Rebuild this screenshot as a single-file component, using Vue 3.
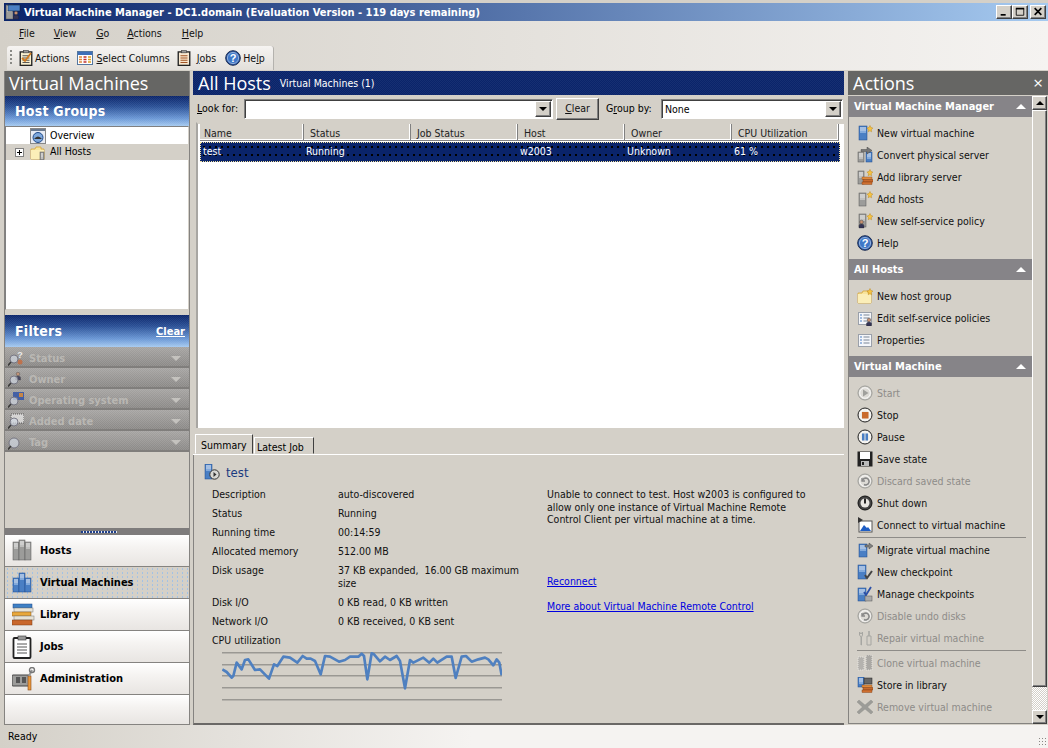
<script setup>
const tower = (x, y, w, h, c = 'b') => {
  const [m, l, d] = c === 'b' ? ['#4a7fc4', '#bcd6f2', '#1f4a8a'] : ['#9c9c9a', '#e4e4e2', '#555555']
  return `<rect x="${x}" y="${y}" width="${w}" height="${h}" fill="${m}" stroke="${d}" stroke-width=".5"/><rect x="${x + 1}" y="${y + 1.5}" width="${w - 2}" height="1" fill="#fff"/><rect x="${x + 1}" y="${y + 3.5}" width="${w - 2}" height="1" fill="#fff"/><rect x="${x + 1}" y="${y + 5.5}" width="${w - 2}" height="1" fill="${l}"/>`
}
const star = `<path d="M13 .5l.9 2 2 .6-1.6 1.5.3 2.2-1.7-1-1.7 1 .3-2.2-1.6-1.5 2-.6z" fill="#f6c343" stroke="#b07c10" stroke-width=".4"/>`
const arrow = `<path d="M8 3h4V1l4 3-4 3V5H8z" fill="#808080" stroke="#333" stroke-width=".4"/>`
const books = (x, y) => `<rect x="${x}" y="${y}" width="10" height="2.5" fill="#e08a3c" stroke="#8a4a18" stroke-width=".4"/><rect x="${x + 1}" y="${y + 2.5}" width="10" height="2.5" fill="#c96a2c" stroke="#7a3a10" stroke-width=".4"/><rect x="${x}" y="${y + 5}" width="10" height="2.5" fill="#d07030" stroke="#7a3a10" stroke-width=".4"/>`
const person = (x, y) => `<circle cx="${x}" cy="${y}" r="1.8" fill="#c89070" stroke="#333" stroke-width=".4"/><path d="M${x - 2.5} ${y + 6}v-2.5q0-1.5 2.5-1.5t2.5 1.5V${y + 6}z" fill="#335" stroke="#222" stroke-width=".3"/>`
const folder = `<path d="M1 5h4l1-2h5v2h3v10H1z" fill="#f8e49c" stroke="#d6a436" stroke-width=".8"/><path d="M1 6h13v9H1z" fill="#fbeeb8"/>`
const page = `<rect x="1.5" y="2.5" width="13" height="12" fill="#f4f6fa" stroke="#9aa0aa"/><path d="M3 5h2M3 8h2M3 11h2" stroke="#4a7fc4" stroke-width="1.2"/><path d="M6.5 5h6M6.5 8h6M6.5 11h6" stroke="#7a8696"/>`
const circle = (f = '#eceae6', s = '#222') => `<circle cx="8" cy="8" r="7" fill="${f}" stroke="${s}"/><circle cx="8" cy="8" r="5.3" fill="none" stroke="#fff" stroke-opacity=".8"/>`
const undo = `<path d="M5 5v3h3" fill="none" stroke="#888" stroke-width="1.3"/><path d="M5.4 7.6A3.4 3.4 0 1 1 7 11.5" fill="none" stroke="#888" stroke-width="1.6"/>`
const help = `<circle cx="8" cy="8" r="7.3" fill="#2c5aa8" stroke="#1c2c50"/><circle cx="8" cy="8" r="5.6" fill="#3f78c8" stroke="#b8cdea" stroke-width=".7"/><text x="8" y="12" text-anchor="middle" font-family="Liberation Sans" font-weight="700" font-size="11" fill="#fff">?</text>`
const clip = (sz) => `<rect x="${sz * .14}" y="${sz * .12}" width="${sz * .72}" height="${sz * .84}" fill="#fff" stroke="#222" stroke-width="${sz / 12}"/><rect x="${sz * .35}" y="${sz * .02}" width="${sz * .3}" height="${sz * .16}" fill="#999" stroke="#333" stroke-width=".5"/><path d="M${sz * .28} ${sz * .36}h${sz * .44}M${sz * .28} ${sz * .5}h${sz * .44}M${sz * .28} ${sz * .64}h${sz * .44}M${sz * .28} ${sz * .78}h${sz * .44}" stroke="#555" stroke-width="${sz / 16}"/>`
const lens = (inner) => `${inner}<circle cx="6" cy="9" r="4" fill="#dce4f0" fill-opacity=".75" stroke="#667" stroke-width=".9"/><path d="M3 12l-3 3.5" stroke="#222" stroke-width="1.5"/>`

const icons = {
  logo: `${tower(1, 1, 7, 14, 'g')}<rect x="3" y="1" width="12" height="6" fill="#4a7fc4" stroke="#123" stroke-width=".5"/>${person(11, 9)}`,
  tbActions: `${clip(16).replace('#fff', '#f8f0d0')}<path d="M4 8l3 3 6-8" fill="none" stroke="#d07a20" stroke-width="1.8"/>`,
  columns: `<rect x=".5" y="1.5" width="15" height="13" fill="#fff" stroke="#55779f"/><rect x="1" y="2" width="14" height="3" fill="#3f6fb8"/><path d="M2 7h3M2 9.500h3M2 12h3" stroke="#e08a3c" stroke-width="1.3"/><path d="M6.500 7h3M6.500 9.500h3M6.500 12h3" stroke="#c03030" stroke-width="1.3"/><path d="M11 7h3M11 9.500h3M11 12h3" stroke="#e0a020" stroke-width="1.3"/>`,
  jobs: clip(16).replace('#fff', '#f8e8d0').replace('#555', '#a05020'),
  help,
  overview: `<rect x=".5" y=".5" width="15" height="15" fill="#e8ecf4" stroke="#888"/><rect x="1" y="1" width="14" height="2" fill="#6a7a90"/><circle cx="8" cy="9.500" r="5" fill="#7ea8dc" stroke="#1f4a8a"/><path d="M4 11q4-5 8 0z" fill="#333"/>`,
  allhosts: `${folder}${tower(10, 8, 4, 8, 'g')}`,
  summary: `${tower(1, 0, 7, 15)}<circle cx="10.500" cy="10.500" r="4.700" fill="#d8d8d4" stroke="#333"/><path d="M9.500 8l3 2.500-3 2.500z" fill="#333"/>`,
  fStatus: lens(`<text x="12" y="8" text-anchor="middle" font-family="Liberation Sans" font-weight="700" font-size="9" fill="#fff">?</text><circle cx="12" cy="12" r="2.500" fill="#c96a3c"/>`),
  fOwner: lens(person(10, 3)),
  fOs: lens(`<rect x="5" y="0" width="11" height="8" fill="#2c50a8"/><rect x="11" y="1" width="4" height="4" fill="#d08030"/>`),
  fDate: lens(`<rect x="3" y="1" width="13" height="9" fill="#fff" fill-opacity=".7" stroke="#444" stroke-dasharray="1 1"/>`),
  fTag: lens('').replace('r="4"', 'r="5"'),
  navHosts: `${tower(1, 3, 6, 18, 'g')}${tower(7, 1, 6, 20, 'g')}${tower(13, 3, 6, 18, 'g')}`,
  navVms: `${tower(1, 7, 6, 14)}${tower(7, 2, 6, 19)}${tower(13, 7, 6, 14)}`,
  navLibrary: `<rect x="1" y="1" width="19" height="4" fill="#3f80c4" stroke="#1f4a8a" stroke-width=".5"/><rect x="2" y="5" width="19" height="4" fill="#e8e4d8" stroke="#777" stroke-width=".5"/><rect x="0" y="9" width="19" height="4" fill="#e8a83c" stroke="#8a5a18" stroke-width=".5"/><rect x="2" y="13" width="20" height="4" fill="#e6e2d6" stroke="#777" stroke-width=".5"/><rect x="0" y="17" width="20" height="5" fill="#c9672c" stroke="#7a3a10" stroke-width=".5"/>`,
  navJobs: `<rect x="1.500" y="3" width="17" height="20" rx="1" fill="#fff" stroke="#222" stroke-width="1.800"/><rect x="6" y="1" width="8" height="4" fill="#999" stroke="#333" stroke-width=".6"/><path d="M5 9h10M5 12h10M5 15h10M5 18h10" stroke="#555"/>`,
  navAdmin: `<rect x="0" y="8" width="18" height="11" rx="1" fill="#9c9c9a" stroke="#444"/><rect x="4" y="10" width="4" height="6" fill="#555"/><rect x="10" y="10" width="4" height="6" fill="#555"/><rect x="16" y="9" width="3" height="14" fill="#e8983c" stroke="#8a4a18" stroke-width=".6"/><path d="M17 9l3-6" stroke="#999" stroke-width="2"/><circle cx="20" cy="3" r="2.500" fill="none" stroke="#777" stroke-width="1.400"/>`,
  newVm: `${tower(2, 1, 8, 14)}${star}`,
  convert: `${tower(1, 5, 6, 10, 'g')}${tower(9, 5, 6, 10)}<path d="M4 2.500h6V0l5 3.500L10 7V4.500H4z" fill="#777" stroke="#333" stroke-width=".4"/>`,
  addLib: `${tower(1, 2, 6, 13, 'g')}${books(5, 8)}${star}`,
  addHosts: `${tower(2, 2, 7, 13, 'g')}${star}`,
  newPolicy: `${tower(2, 1, 7, 13, 'g')}${person(4.500, 9)}${star}`,
  newGroup: `${folder}${star}`,
  editPolicy: `${page}${person(12, 10)}`,
  props: page,
  start: `${circle('#dddbd6', '#9a9a96')}<path d="M6 4.500L11.500 8 6 11.500z" fill="#a0a09c"/>`,
  stop: `${circle()}<rect x="5" y="5" width="6.500" height="6.500" fill="#c96a2c"/>`,
  pause: `${circle()}<rect x="5" y="4.500" width="2.500" height="7" fill="#4a7fc4"/><rect x="8.500" y="4.500" width="2.500" height="7" fill="#4a7fc4"/>`,
  save: `<rect x=".5" y=".5" width="15" height="15" fill="#222"/><rect x="3" y="1" width="10" height="7" fill="#fff"/><rect x="4" y="10" width="8" height="5" fill="#bbb"/><rect x="5" y="11" width="2" height="3" fill="#222"/>`,
  discard: `${circle('#dddbd6', '#9a9a96')}${undo}`,
  shutdown: `<circle cx="8" cy="8" r="7" fill="#444" stroke="#111"/><circle cx="8" cy="8" r="4.500" fill="#e8e6e2"/><path d="M8 3.500v5" stroke="#111" stroke-width="1.800"/>`,
  connect: `<rect x="2" y="4" width="13" height="11" fill="#fff" stroke="#555"/><path d="M3 14l4-6 3 3 1-1 3 4z" fill="#1f5ec4"/><path d="M1 0l5 3-5 3z" fill="#333"/>`,
  migrate: `${tower(2, 2, 8, 13)}${arrow}`,
  newCp: `${tower(1, 1, 8, 14)}<path d="M8 11l2 3 5-7" fill="none" stroke="#444" stroke-width="2"/>`,
  manageCp: `${tower(1, 2, 8, 13)}<path d="M7 6l2 3 5-8" fill="none" stroke="#2c50a8" stroke-width="1.800"/><rect x="8" y="10" width="7" height="5" fill="#aaa" stroke="#555" stroke-width=".5"/>`,
  repair: `<path d="M4 15V7L2.500 5V2l1.500 2 1.500-2v3L4.500 7v8zM10 15V6h4v9z" fill="none" stroke="#a6a6a2"/><path d="M12 6V1" stroke="#a6a6a2" stroke-width="1.500"/>`,
  clone: `<rect x="1" y="2" width="6" height="13" fill="#b4b2ae" stroke-dasharray="1 1" stroke="#e6e4e0"/><rect x="9" y="0" width="6" height="15" fill="#aaa8a4" stroke-dasharray="1 1" stroke="#e6e4e0"/>`,
  store: `${tower(1, 0, 6, 10)}<rect x="7" y="1" width="8" height="6" fill="#666" stroke="#222" stroke-width=".5"/>${books(5, 8)}`,
  remove: `<path d="M2 1l6 5 6-5 2 2-5.500 5 5.500 5-2 2-6-5-6 5-2-2 5.500-5L0 3z" fill="#9c9c98" stroke="#8a8a86" stroke-width=".4"/>`,
}

const menus = [['F', 'ile'], ['V', 'iew'], ['G', 'o'], ['A', 'ctions'], ['H', 'elp']]
const filters = [['fStatus', 'Status'], ['fOwner', 'Owner'], ['fOs', 'Operating system'], ['fDate', 'Added date'], ['fTag', 'Tag']]
const navs = [['navHosts', 'Hosts'], ['navVms', 'Virtual Machines', true], ['navLibrary', 'Library'], ['navJobs', 'Jobs'], ['navAdmin', 'Administration']]
const columns = ['Name', 'Status', 'Job Status', 'Host', 'Owner', 'CPU Utilization']
const cells = ['test', 'Running', '', 'w2003', 'Unknown', '61 %']
const details = [
  ['Description', 'auto-discovered'],
  ['Status', 'Running'],
  ['Running time', '00:14:59'],
  ['Allocated memory', '512.00 MB'],
  ['Disk usage', '37 KB expanded,\u00a0 16.00 GB maximum\nsize'],
  ['Disk I/O', '0 KB read, 0 KB written'],
  ['Network I/O', '0 KB received, 0 KB sent'],
  ['CPU utilization', ''],
]
const sections = [
  { title: 'Virtual Machine Manager', items: [['newVm', 'New virtual machine'], ['convert', 'Convert physical server'], ['addLib', 'Add library server'], ['addHosts', 'Add hosts'], ['newPolicy', 'New self-service policy'], ['help', 'Help']] },
  { title: 'All Hosts', items: [['newGroup', 'New host group'], ['editPolicy', 'Edit self-service policies'], ['props', 'Properties']] },
  { title: 'Virtual Machine', items: [
    ['start', 'Start', 1], ['stop', 'Stop'], ['pause', 'Pause'], ['save', 'Save state'], ['discard', 'Discard saved state', 1], ['shutdown', 'Shut down'], ['connect', 'Connect to virtual machine'], 'sep',
    ['migrate', 'Migrate virtual machine'], ['newCp', 'New checkpoint'], ['manageCp', 'Manage checkpoints'], ['discard', 'Disable undo disks', 1], ['repair', 'Repair virtual machine', 1], 'sep',
    ['clone', 'Clone virtual machine', 1], ['store', 'Store in library'], ['remove', 'Remove virtual machine', 1], ['props', ''],
  ] },
]
const cpu = '97,150 110,158 125,175 130,170 140,130 155,150 165,122 175,120 195,152 210,150 237,178 252,135 262,140 280,112 300,115 322,130 338,110 350,118 362,118 375,125 392,165 405,110 420,112 447,127 465,122 480,112 505,112 515,103 522,110 532,180 545,102 552,105 570,126 585,112 600,122 620,110 630,125 645,207 660,122 670,130 700,115 718,130 730,118 742,130 770,112 785,112 797,176 815,112 828,110 845,127 865,120 885,115 895,120 910,138 920,120 928,130 935,168'
</script>

<template>
  <div class="window">
    <header class="titlebar">
      <svg class="ico16" viewBox="0 0 16 16" v-html="icons.logo"></svg>
      <span class="title-text">Virtual Machine Manager - DC1.domain (Evaluation Version - 119 days remaining)</span>
      <div class="wbtns">
        <button class="wbtn"><svg viewBox="0 0 12 10"><rect x="2" y="8" width="6" height="2" fill="#000"/></svg></button>
        <button class="wbtn"><svg viewBox="0 0 12 10"><path d="M1.500 1.500h9v8h-9z" fill="none" stroke="#000"/><path d="M1 1.500h10" stroke="#000" stroke-width="2"/></svg></button>
        <button class="wbtn gapl"><svg viewBox="0 0 12 10"><path d="M2 1l8 8M10 1l-8 8" stroke="#000" stroke-width="2"/></svg></button>
      </div>
    </header>

    <nav class="menubar">
      <span v-for="m in menus" :key="m[0]" class="menu"><u>{{ m[0] }}</u>{{ m[1] }}</span>
    </nav>

    <div class="toolband">
      <div class="toolbar">
        <span class="grip"></span>
        <span class="tool t1"><svg class="ico16" viewBox="0 0 16 16" v-html="icons.tbActions"></svg>Actions</span>
        <span class="tool t2"><svg class="ico16" viewBox="0 0 16 16" v-html="icons.columns"></svg><span><u>S</u>elect Columns</span></span>
        <span class="tool t3"><svg class="ico16" viewBox="0 0 16 16" v-html="icons.jobs"></svg><span><u>J</u>obs</span></span>
        <span class="tool t4"><svg class="ico16" viewBox="0 0 16 16" v-html="icons.help"></svg><span>He<u>l</u>p</span></span>
      </div>
    </div>

    <main class="main">
      <aside class="left">
        <h2 class="panel-head">Virtual Machines</h2>
        <div class="band hostgroups"><span>Host Groups</span></div>
        <div class="tree">
          <div class="node"><svg class="ico16" viewBox="0 0 16 16" v-html="icons.overview"></svg><span>Overview</span></div>
          <div class="node sel"><span class="plus"></span><svg class="ico16" viewBox="0 0 16 16" v-html="icons.allhosts"></svg><span class="seltext">All Hosts</span></div>
        </div>
        <div class="band filters"><span>Filters</span><a class="clear">Clear</a></div>
        <div v-for="f in filters" :key="f[1]" class="filter">
          <svg class="ico16" viewBox="0 0 16 16" v-html="icons[f[0]]"></svg>
          <span>{{ f[1] }}</span>
          <i class="tri"></i>
        </div>
        <div class="filter-rest"></div>
        <div class="splitter"><span></span></div>
        <div v-for="n in navs" :key="n[1]" class="navbtn" :class="{ active: n[2] }">
          <svg class="ico24" viewBox="0 0 24 24" v-html="icons[n[0]]"></svg>
          <span>{{ n[1] }}</span>
        </div>
        <div class="navrest"></div>
      </aside>

      <section class="center">
        <div class="center-head">
          <span class="big">All Hosts</span>
          <span class="count">Virtual Machines (1)</span>
        </div>
        <div class="searchbar">
          <label class="l1"><u>L</u>ook for:</label>
          <div class="combo c1"><span class="dd"><i></i></span></div>
          <button class="clearbtn"><u>C</u>lear</button>
          <label class="l2">G<u>r</u>oup by:</label>
          <div class="combo c2"><span class="val">None</span><span class="dd"><i></i></span></div>
        </div>
        <div class="list">
          <div class="lhead"><span v-for="c in columns" :key="c">{{ c }}</span></div>
          <div class="lrow"><span v-for="(c, i) in cells" :key="i">{{ c }}</span></div>
        </div>
        <div class="tabs">
          <span class="tab on">Summary</span>
          <span class="tab">Latest Job</span>
        </div>
        <div class="detail">
          <div class="dleft">
            <div class="dtitle"><svg class="ico16" viewBox="0 0 16 16" v-html="icons.summary"></svg><span>test</span></div>
            <dl class="grid">
              <template v-for="d in details" :key="d[0]">
                <dt>{{ d[0] }}</dt>
                <dd>{{ d[1] }}</dd>
              </template>
            </dl>
            <svg class="chart" viewBox="96 98 840 162">
              <path d="M96 100.500H936M96 136.500H936M96 169.500H936M96 205.500H936M96 241.500H936" stroke="#7e7c7a" stroke-width="3" fill="none"/>
              <polyline :points="cpu" fill="none" stroke="#4f80c0" stroke-width="8" stroke-linejoin="round"/>
            </svg>
          </div>
          <div class="dright">
            <p>Unable to connect to test. Host w2003 is configured to<br>allow only one instance of Virtual Machine Remote<br>Control Client per virtual machine at a time.</p>
            <a class="link l-a">Reconnect</a>
            <a class="link l-b">More about Virtual Machine Remote Control</a>
          </div>
        </div>
      </section>

      <aside class="right">
        <h2 class="panel-head act"><span>Actions</span><span class="x">×</span></h2>
        <div class="rbody">
          <div class="actions">
            <template v-for="s in sections" :key="s.title">
              <div class="shead"><span>{{ s.title }}</span><i class="tri up"></i></div>
              <div class="sitems">
                <template v-for="(it, i) in s.items" :key="i">
                  <div v-if="it === 'sep'" class="sep"></div>
                  <div v-else class="act-row" :class="{ off: it[2] }">
                    <svg class="ico16" viewBox="0 0 16 16" v-html="icons[it[0]]"></svg>
                    <span>{{ it[1] }}</span>
                  </div>
                </template>
              </div>
            </template>
          </div>
          <div class="scroll">
            <span class="sbtn"><i class="up"></i></span>
            <span class="thumb"></span>
            <span class="strack"></span>
            <span class="sbtn"><i></i></span>
          </div>
        </div>
      </aside>
    </main>

    <footer class="status">
      <span>Ready</span>
      <span class="resize"></span>
    </footer>
  </div>
</template>

<style>
html, body { margin: 0; background: #d4d0c8; }
</style>

<style scoped>
.window {
  width: 1048px; height: 748px; overflow: hidden; display: flex; flex-direction: column;
  background: #d4d0c8; color: #000; box-sizing: border-box; padding-top: 3px;
  font-family: "DejaVu Sans", "Liberation Sans", sans-serif; font-stretch: condensed; font-size: 10.5px; line-height: 13px;
}
u { text-decoration: underline; }
.ico16 { width: 16px; height: 16px; flex: none; display: block; }
.ico24 { width: 24px; height: 24px; flex: none; display: block; }

.titlebar { height: 18px; flex: none; margin-left: 4px; display: flex; align-items: center; padding-left: 1px; background: linear-gradient(90deg, #0a246a, #a6caf0); color: #fff; font-weight: 700; font-size: 11px; }
.title-text { margin-left: 3px; white-space: nowrap; }
.wbtns { margin-left: auto; display: flex; padding-right: 2px; }
.wbtn { width: 16px; height: 14px; padding: 1px 2px; margin: 0; box-sizing: border-box; background: #d4d0c8; border: 1px solid; border-color: #fff #404040 #404040 #fff; box-shadow: inset -1px -1px #808080; display: flex; }
.wbtn svg { width: 10px; height: 9px; }
.gapl { margin-left: 2px; }

.menubar, .toolband { background: linear-gradient(90deg, #d4d0c8 0, #f5f3f1 100%); }
.menubar { height: 25px; flex: none; display: flex; align-items: center; padding-left: 4px; }
.menu { padding: 0 15px; color: #111; }
.menu:nth-child(2) { padding-left: 4px; padding-right: 15px; }
.menu:nth-child(3) { padding-left: 5px; padding-right: 16px; }
.menu:nth-child(4) { padding-left: 2px; padding-right: 19px; }
.menu:nth-child(5) { padding-left: 1px; }

.toolband { height: 24px; flex: none; display: flex; padding-left: 7px; box-sizing: border-box; margin-bottom: 1px; }
.toolbar { width: 267px; display: flex; align-items: center; box-sizing: border-box; background: linear-gradient(180deg, #f6f4f2, #e2dfda); border-radius: 3px 3px 0 0; border-right: 1px solid #b4b2ae; padding-left: 3px; }
.grip { width: 2px; height: 16px; background: repeating-linear-gradient(180deg, #8a8a86 0 2px, transparent 2px 4px); margin-right: 6px; }
.tool { display: flex; align-items: center; gap: 1px; white-space: nowrap; color: #111; }
.t2 { margin-left: 8px; gap: 3px; }
.t3 { margin-left: 6px; gap: 5px; }
.t4 { margin-left: 9px; gap: 2px; }

.main { flex: 1; min-height: 0; display: flex; height: 654px; }

.left { flex: none; display: flex; flex-direction: column; border-right: 1px solid #858380; box-sizing: border-box; border-left: 1px solid #858380; width: 186px; margin-left: 4px; }
.panel-head { margin: 0; height: 25px; flex: none; background: #666664; color: #fff; font-weight: 400; font-size: 18px; line-height: 25px; padding-left: 4px; font-stretch: normal; font-family: "Open Sans", "DejaVu Sans", sans-serif; }
.band { flex: none; background-color: #0a246a; background-image: repeating-conic-gradient(transparent 0 25%, rgba(255,255,255,.06) 0 50%), linear-gradient(180deg, #0a246a 0, #2a5096 35%, #6b98d6 75%, #a6caf0 100%); background-size: 2px 2px, 100% 100%; color: #fff; font-weight: 700; font-size: 14px; letter-spacing: .25px; padding-left: 10px; display: flex; align-items: center; box-sizing: border-box; }
.hostgroups { height: 30px; }
.filters { height: 32px; margin-top: 5px; justify-content: space-between; padding-right: 4px; }
.clear { font-size: 11px; text-decoration: underline; letter-spacing: 0; }
.tree { height: 184px; flex: none; box-sizing: border-box; background: #fff; border: 1px solid; border-color: #808080 #d4d0c8 #d4d0c8 #808080; }
.node { height: 17px; display: flex; align-items: center; padding-left: 24px; gap: 4px; }
.node.sel { background: #d4d0c8; padding-left: 9px; height: 16px; }
.seltext { margin-top: -2px; }
.plus { width: 9px; height: 9px; box-sizing: border-box; border: 1px solid #808080; background: linear-gradient(#000, #000) center / 5px 1px no-repeat, linear-gradient(#000, #000) center / 1px 5px no-repeat, #fff; margin-right: 2px; }
.filter { height: 21px; flex: none; box-sizing: border-box; display: flex; align-items: center; padding: 3px 8px 0 3px; gap: 5px; background-image: repeating-conic-gradient(transparent 0 25%, rgba(255,255,255,.1) 0 50%), linear-gradient(180deg, #a6a4a2, #8a8886); background-size: 2px 2px, 100% 100%; border-bottom: 2px solid #807e7c; color: #b9b7b3; font-weight: 700; font-size: 11px; }
.filter .ico16 { opacity: .8; }
.tri { width: 0; height: 0; margin-left: auto; border-left: 5px solid transparent; border-right: 5px solid transparent; border-top: 5px solid #c4c2be; }
.tri.up { border-top: 0; border-bottom: 5px solid #fff; }
.filter-rest { height: 76px; flex: none; }
.splitter { height: 7px; flex: none; background: #7e7c7c; display: flex; justify-content: center; align-items: center; }
.splitter span { width: 36px; height: 2px; background: repeating-linear-gradient(90deg, #1f3f8a 0 2px, #e8ecf4 2px 3px); margin-left: 4px; }
.navbtn { height: 32px; flex: none; box-sizing: border-box; display: flex; align-items: center; padding-left: 7px; gap: 4px; font-weight: 700; font-size: 11px; background: linear-gradient(180deg, #fff 0, #f5f3f1 40%, #e8e5e2 100%); border-bottom: 1px solid #858380; }
.navbtn.active { background-color: #d4d0c8; background-image: radial-gradient(#9cc0e8 .6px, transparent .8px); background-size: 5px 4px; }
.navrest { flex: 1; background: linear-gradient(180deg, #fff 0, #f5f3f1 40%, #e8e5e2 100%); border-bottom: 1px solid #858380; }

.center { width: 651px; margin-left: 3px; flex: none; display: flex; flex-direction: column; box-sizing: border-box; }
.center-head { height: 24px; flex: none; background-color: #0a246a; background-image: repeating-conic-gradient(transparent 0 25%, rgba(255,255,255,.05) 0 50%); background-size: 2px 2px; color: #fff; display: flex; align-items: center; padding-left: 5px; }
.big { font-size: 18px; font-family: "Open Sans", "DejaVu Sans", sans-serif; font-stretch: normal; }
.count { margin-left: 9px; margin-top: 1px; }
.searchbar { height: 27px; flex: none; display: flex; align-items: center; padding-left: 4px; box-sizing: border-box; }
label { white-space: nowrap; flex: none; }
.l1 { width: 42px; }
.l2 { width: 47px; margin-left: 7px; }
.combo { box-sizing: border-box; height: 20px; background: #fff; border: 1px solid; border-color: #808080 #fff #fff #808080; box-shadow: inset 1px 1px #404040; display: flex; align-items: center; position: relative; }
.c1 { width: 309px; margin-left: 5px; }
.c2 { width: 182px; margin-left: 8px; }
.val { padding-left: 3px; padding-top: 2px; }
.dd { margin-left: auto; width: 16px; height: 16px; margin-right: 1px; box-sizing: border-box; background: #d4d0c8; border: 1px solid; border-color: #fff #404040 #404040 #fff; box-shadow: inset -1px -1px #808080; display: flex; align-items: center; justify-content: center; }
.dd i { border-left: 4px solid transparent; border-right: 4px solid transparent; border-top: 4px solid #000; }
.clearbtn { width: 43px; height: 22px; margin: 0 0 0 3px; padding: 0; font: inherit; font-stretch: inherit; color: #111; background: #d4d0c8; border: 1px solid; border-color: #fff #404040 #404040 #fff; box-shadow: inset -1px -1px #808080; }
.list { height: 306px; flex: none; box-sizing: border-box; margin: 0 0 0 3px; background: #fff; border: 2px solid #d4d0c8; border-left-color: #a8a6a2; border-right: 0; border-bottom: 0; padding-left: 2px; }
.lhead { height: 17px; display: flex; background: #d4d0c8; width: 639px; }
.lhead span { width: 107px; flex: none; box-sizing: border-box; padding-left: 6px; line-height: 19px; border-right: 1px solid #808080; border-bottom: 1px solid #808080; box-shadow: inset -1px -1px #fff; color: #222; }
.lhead span:first-child { width: 104px; padding-left: 4px; }
.lrow { height: 20px; margin: 1px 0 0 0; width: 640px; box-sizing: border-box; display: flex; align-items: center; padding-bottom: 1px; color: #fff; background-color: #0a246a; background-image: radial-gradient(#000 .7px, transparent .9px); background-size: 6px 8px; border: 1px dotted #f0e0a0; }
.lrow span { width: 107px; flex: none; box-sizing: border-box; padding-left: 2px; }
.lrow span:first-child { width: 103px; }
.tabs { height: 27px; flex: none; display: flex; align-items: flex-end; padding-left: 2px; box-sizing: border-box; gap: 1px; border-bottom: 1px solid #fff; }
.tab { height: 17px; line-height: 18px; padding: 0 3px 0 2px; width: 60px; box-sizing: border-box; border: 1px solid #808080; border-color: #fff #404040 transparent #fff; white-space: nowrap; }
.tab.on { height: 20px; width: 58px; line-height: 20px; padding-left: 5px; }
.detail { flex: 1; min-height: 0; display: flex; border-left: 1px solid #858380; border-bottom: 2px solid #6a6866; box-sizing: border-box; padding-left: 10px; color: #111; }
.dleft { width: 343px; flex: none; }
.dtitle { height: 18px; margin-top: 8px; display: flex; align-items: center; gap: 6px; color: #1a3a80; font-size: 13px; }
.grid { margin: 7px 0 0 8px; display: grid; grid-template-columns: 126px 1fr; row-gap: 5.4px; line-height: 13.5px; }
.grid dt { margin: 0; }
.grid dd { margin: 0; white-space: pre-line; }
.chart { display: block; width: 280px; height: 54px; margin: 5px 0 0 18px; }
.dright { padding-top: 33px; }
.dright p { margin: 0; line-height: 12.5px; }
.link { display: block; color: #0000e0; text-decoration: underline; }
.l-a { margin-top: 49px; }
.l-b { margin-top: 12px; }

.right { flex: 1; margin-left: 4px; display: flex; flex-direction: column; min-width: 0; }
.act { display: flex; justify-content: space-between; height: 24px; line-height: 24px; padding: 0 5px 0 5px; }
.x { font-size: 17px; }
.rbody { flex: 1; min-height: 0; display: flex; margin-top: 1px; padding-bottom: 1px; box-sizing: border-box; }
.actions { width: 184px; flex: none; overflow: hidden; border-left: 1px solid #858380; border-bottom: 1px solid #858380; box-sizing: border-box; }
.shead { height: 21px; box-sizing: border-box; background: #868488; color: #fff; font-weight: 700; font-size: 11px; display: flex; align-items: center; padding: 0 6px 0 5px; }
.sitems { padding: 5px 0; }
.act-row { height: 22px; display: flex; align-items: center; padding-left: 8px; gap: 4px; color: #111; }
.act-row.off { color: #8e8c88; }
.sep { height: 1px; margin: 1px 6px 1px 8px; background: #8e8c88; }
.scroll { width: 15px; display: flex; flex-direction: column; flex: none; margin-left: 0; }
.sbtn { height: 14px; flex: none; box-sizing: border-box; background: #d4d0c8; border: 1px solid; border-color: #fff #404040 #404040 #fff; box-shadow: inset -1px -1px #808080; display: flex; align-items: center; justify-content: center; }
.sbtn i { border-left: 4px solid transparent; border-right: 4px solid transparent; border-top: 4px solid #000; }
.sbtn i.up { border-top: 0; border-bottom: 4px solid #000; }
.thumb { height: 577px; flex: none; box-sizing: border-box; background: #d4d0c8; border: 1px solid; border-color: #fff #404040 #404040 #fff; box-shadow: inset -1px -1px #808080; }
.strack { flex: 1; background-image: repeating-conic-gradient(#fff 0 25%, #d4d0c8 0 50%); background-size: 2px 2px; }

.status { height: 23px; flex: none; box-sizing: border-box; display: flex; align-items: center; padding-left: 8px; background: linear-gradient(90deg, #d4d0c8 0, #f5f3f1 45%, #f5f3f1 100%); }
.resize { margin-left: auto; margin-right: 2px; width: 8px; height: 8px; background-image: radial-gradient(#8a8884 .9px, transparent 1px); background-size: 3px 3px; margin-top: 8px; }
</style>
